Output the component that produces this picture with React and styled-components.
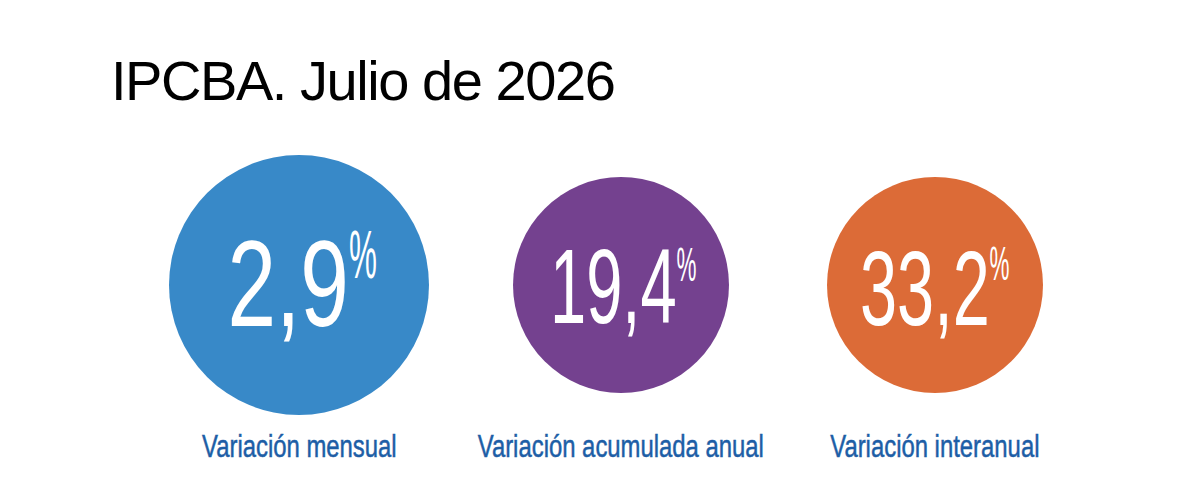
import React from 'react';
import styled, { createGlobalStyle } from 'styled-components';

const GlobalStyle = createGlobalStyle`
  html, body {
    margin: 0;
    padding: 0;
    background: #fff;
  }
  body {
    font-family: "Liberation Sans", Arial, sans-serif;
  }
`;

const Page = styled.div`
  width: 1200px;
  height: 504px;
  box-sizing: border-box;
  padding-top: 53px;
  overflow: hidden;
  background: #fff;
`;

const Title = styled.h1`
  margin: 0 0 0 111px;
  font-size: 56px;
  line-height: 56px;
  font-weight: 400;
  letter-spacing: -1.45px;
  color: #000;
`;

const Stats = styled.div`
  display: grid;
  grid-template-columns: 300px 344px 284px;
  margin-top: 46px;
  padding-left: 149px;
`;

const Stat = styled.div`
  display: flex;
  flex-direction: column;
  align-items: center;
`;

const CircleArea = styled.div`
  width: 100%;
  height: 260px;
  display: flex;
  align-items: center;
  justify-content: center;
`;

const Circle = styled.div`
  width: ${({ $size }) => $size}px;
  height: ${({ $size }) => $size}px;
  border-radius: 50%;
  background: ${({ $color }) => $color};
  display: flex;
  align-items: center;
  justify-content: center;
  flex-shrink: 0;
`;

const Figure = styled.div`
  display: flex;
  align-items: flex-start;
  color: #fff;
  white-space: nowrap;
  transform: translate(${({ $dx }) => $dx}px, ${({ $dy }) => $dy}px)
    scaleX(${({ $k }) => $k});
  transform-origin: center;
`;

const Digits = styled.span`
  font-size: ${({ $size }) => $size}px;
  line-height: 1;
`;

const Percent = styled.span`
  font-size: ${({ $size }) => $size}px;
  line-height: 1;
  margin-top: ${({ $top }) => $top}px;
  margin-right: ${({ $size, $s }) => -(1 - $s) * 0.889 * $size}px;
  transform: scaleX(${({ $s }) => $s});
  transform-origin: left top;
`;

const Label = styled.div`
  margin-top: 16px;
  font-size: 31px;
  line-height: 1;
  color: #1d5ea6;
  white-space: nowrap;
  -webkit-text-stroke: 0.5px #1d5ea6;
  transform: scaleX(0.77);
  transform-origin: center;
`;

const stats = [
  {
    value: '2,9',
    label: 'Variación mensual',
    color: '#3889c8',
    size: 260,
    digits: 123,
    k: 0.71,
    pct: 68,
    s: 0.65,
    pctTop: -2,
    dx: 3,
    dy: -2.5,
  },
  {
    value: '19,4',
    label: 'Variación acumulada anual',
    color: '#74418f',
    size: 216,
    digits: 105,
    k: 0.62,
    pct: 48,
    s: 0.755,
    pctTop: 7,
    dx: 2,
    dy: 1,
  },
  {
    value: '33,2',
    label: 'Variación interanual',
    color: '#dc6b37',
    size: 216,
    digits: 105,
    k: 0.635,
    pct: 48,
    s: 0.737,
    pctTop: 4,
    dx: 0,
    dy: 2.8,
  },
];

function App() {
  return (
    <>
      <GlobalStyle />
      <Page>
        <Title>IPCBA. Julio de 2026</Title>
        <Stats>
          {stats.map((item) => (
            <Stat key={item.label}>
              <CircleArea>
                <Circle $size={item.size} $color={item.color}>
                  <Figure $k={item.k} $dx={item.dx} $dy={item.dy}>
                    <Digits $size={item.digits}>{item.value}</Digits>
                    <Percent $size={item.pct} $s={item.s} $top={item.pctTop}>
                      %
                    </Percent>
                  </Figure>
                </Circle>
              </CircleArea>
              <Label>{item.label}</Label>
            </Stat>
          ))}
        </Stats>
      </Page>
    </>
  );
}

export default App;
